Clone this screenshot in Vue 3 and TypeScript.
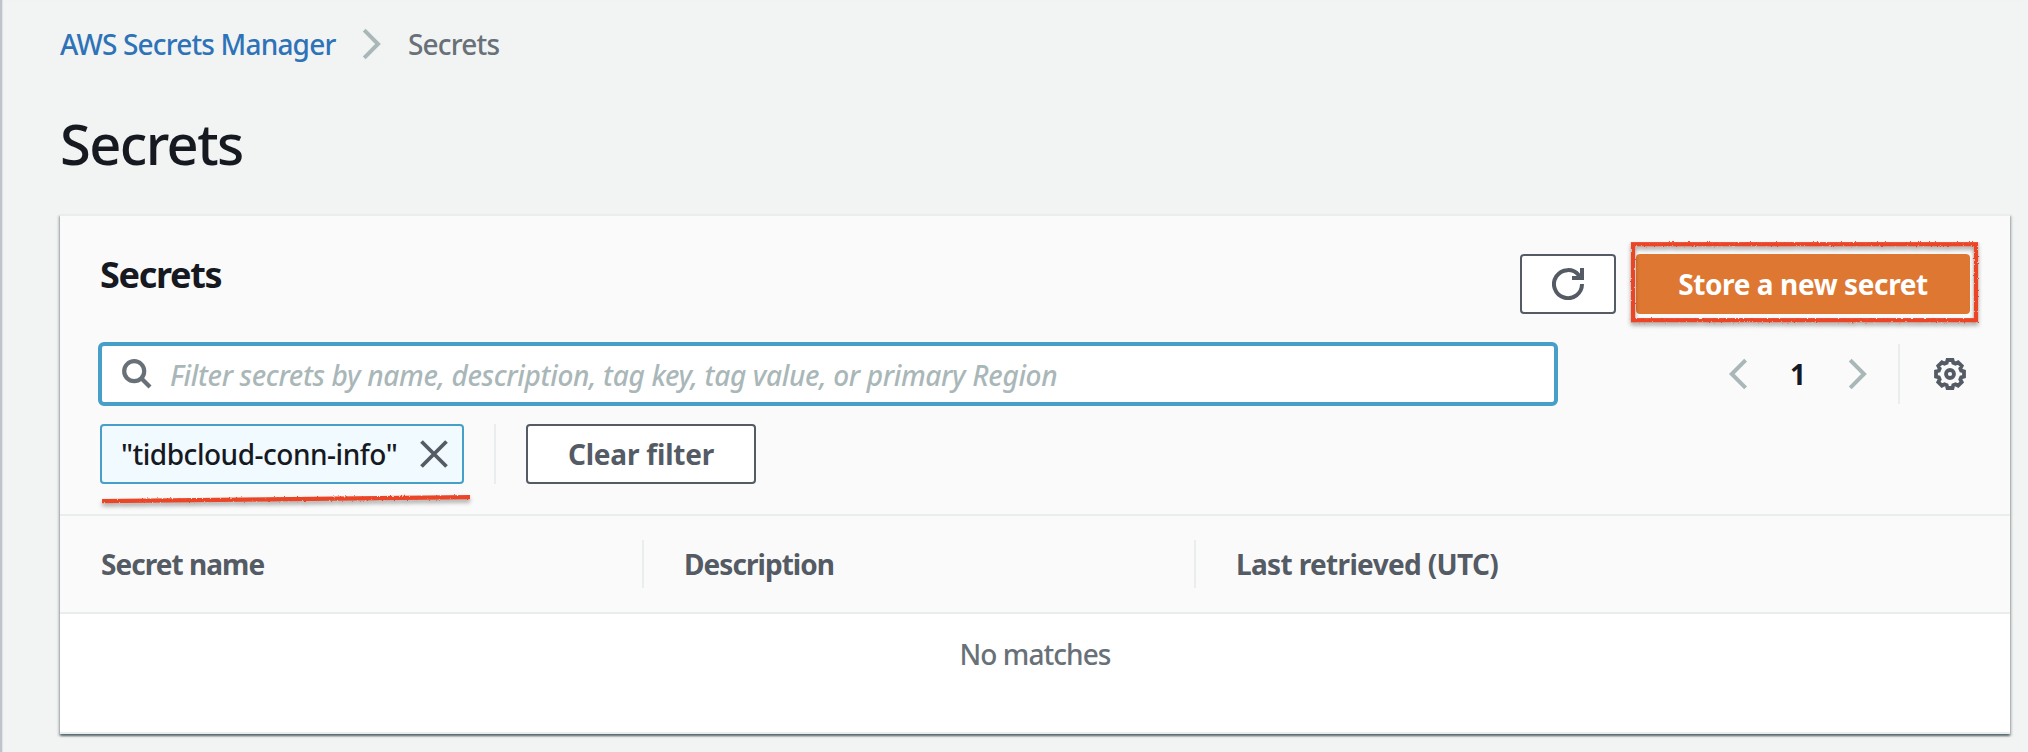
<script setup lang="ts">
import { ref } from 'vue'

const query = ref('')
const filters = ref<string[]>(['"tidbcloud-conn-info"'])
const columns = [
  { label: 'Secret name', key: 'name' },
  { label: 'Description', key: 'description' },
  { label: 'Last retrieved (UTC)', key: 'retrieved' },
]
const clearFilters = () => {
  filters.value = []
}
</script>

<template>
  <div class="page">
    <nav class="breadcrumb">
      <a class="crumb-link">AWS Secrets Manager</a>
      <svg class="crumb-sep" width="20" height="32" viewBox="0 0 20 32"><path d="M2.2 2.2 16 16 2.2 29.8" /></svg>
      <span class="crumb-current">Secrets</span>
    </nav>
    <h1 class="title"><span>Secrets</span></h1>

    <section class="panel">
      <div class="tools">
        <div class="top">
          <h2 class="heading">Secrets</h2>
          <div class="actions">
            <button class="btn refresh" aria-label="Refresh">
              <svg width="32" height="32" viewBox="0 0 32 32">
                <path class="ln" d="M30 16A14 14 0 1 1 26.8 7.2L29 10" />
                <path class="ln" d="M30 0V10H20" />
              </svg>
            </button>
            <div class="primary-wrap">
              <button class="btn primary"><span>Store a new secret</span></button>
              <svg class="marker box" width="360" height="94" viewBox="0 0 360 94">
                <defs>
                  <filter id="crayon" x="-5%" y="-20%" width="110%" height="150%">
                    <feTurbulence type="fractalNoise" baseFrequency="0.6" numOctaves="2" seed="4" result="n" />
                    <feDisplacementMap in="SourceGraphic" in2="n" scale="2.5" xChannelSelector="R" yChannelSelector="G" />
                  </filter>
                </defs>
                <rect x="7" y="6.2" width="343" height="76" filter="url(#crayon)" />
              </svg>
            </div>
          </div>
        </div>

        <div class="search-row">
          <label class="search">
            <svg width="30" height="30" viewBox="0 0 30 30">
              <circle cx="12.2" cy="12.2" r="10" />
              <path d="M19 19 28 28" />
            </svg>
            <input v-model="query" placeholder="Filter secrets by name, description, tag key, tag value, or primary Region" />
          </label>
          <div class="pager">
            <svg class="chev" width="20" height="32" viewBox="0 0 20 32"><path d="M17.6 2.2 3.8 16 17.6 29.8" /></svg>
            <b class="page-no">1</b>
            <svg class="chev" width="20" height="32" viewBox="0 0 20 32"><path d="M2.2 2.2 16 16 2.2 29.8" /></svg>
            <i class="rule"></i>
            <svg class="gear" width="32" height="32" viewBox="0 0 32 32">
              <path
                d="M13.5 2h5l.8 2.800 2.200.9 2.600-1.400 3.600 3.600-1.400 2.600.9 2.200 2.800.8v5l-2.800.8-.9 2.200 1.400 2.600-3.600 3.600-2.600-1.400-2.200.9-.8 2.800h-5l-.8-2.800-2.200-.9-2.600 1.400-3.600-3.600 1.400-2.600-.9-2.200L2 18.500v-5l2.800-.8.9-2.200-1.400-2.600 3.600-3.600 2.600 1.400 2.200-.9z"
              />
              <circle cx="16" cy="16" r="4" />
            </svg>
          </div>
        </div>

        <div class="chip-row">
          <div v-for="f in filters" :key="f" class="chip">
            <span>{{ f }}</span>
            <svg width="28" height="28" viewBox="0 0 28 28"><path d="M1.5 1.5 26.5 26.5M26.5 1.5 1.5 26.5" /></svg>
            <svg class="marker line" width="376" height="16" viewBox="0 0 376 16">
              <path d="M3 8.2 371 4.2" filter="url(#crayon-line)" />
              <defs>
                <filter id="crayon-line" filterUnits="userSpaceOnUse" x="0" y="-4" width="376" height="24">
                  <feTurbulence type="fractalNoise" baseFrequency="0.6" numOctaves="2" seed="7" result="n" />
                  <feDisplacementMap in="SourceGraphic" in2="n" scale="2.5" xChannelSelector="R" yChannelSelector="G" />
                </filter>
              </defs>
            </svg>
          </div>
          <i class="rule"></i>
          <button class="btn clear" @click="clearFilters"><span>Clear filter</span></button>
        </div>
      </div>

      <div class="columns">
        <div v-for="c in columns" :key="c.key" class="col" :class="c.key">
          <span>{{ c.label }}</span>
        </div>
      </div>
      <div class="empty"><span>No matches</span></div>
    </section>
  </div>
</template>

<style>
body {
  background: #f2f4f4;
  overflow: hidden;
}
</style>

<style scoped>
* {
  box-sizing: border-box;
}
.page {
  height: 752px;
  padding: 26px 18px 0 60px;
  background: #f2f4f3;
  box-shadow: inset 2px 0 0 #bec4c9, inset 3px 0 1px #dfe3e4;
  font-family: 'Noto Sans', 'Open Sans', sans-serif;
  font-size: 28px;
  line-height: 36px;
  color: #16191f;
}
svg {
  display: block;
  flex: none;
  fill: none;
}
.breadcrumb {
  display: flex;
  align-items: center;
  height: 36px;
  font-weight: 500;
  white-space: nowrap;
}
.crumb-link {
  width: 302px;
  color: #2e73b8;
  letter-spacing: -0.82px;
}
.crumb-current {
  margin-left: 26px;
  color: #687078;
  letter-spacing: -0.8px;
}
.crumb-sep,
.chev {
  stroke: #aab7b8;
  stroke-width: 4;
}
.title {
  margin: 47px 0 0;
  font-size: 56px;
  line-height: 68px;
  font-weight: 500;
  letter-spacing: -1.6px;
}
.panel {
  margin-top: 37px;
  width: 1950px;
  height: 520px;
  background: #fff;
  border-top: 2px solid #eaeded;
  border-bottom: 2px solid #eaeded;
  box-shadow: 0 2px 2px 0 rgba(0, 28, 36, 0.5), 2px 2px 2px 0 rgba(0, 28, 36, 0.15), -2px 2px 2px 0 rgba(0, 28, 36, 0.15);
}
.tools {
  height: 300px;
  padding: 38px 40px 0 38px;
  background: #fafafa;
  border-bottom: 2px solid #eaeded;
}
.top {
  display: flex;
  justify-content: space-between;
  height: 60px;
}
.heading {
  margin: 0 0 0 2px;
  font-size: 36px;
  line-height: 42px;
  font-weight: 700;
  letter-spacing: -1.3px;
}
.actions {
  display: flex;
  gap: 20px;
}
.btn {
  display: flex;
  align-items: center;
  justify-content: center;
  height: 60px;
  padding: 0 0 1px;
  background: #fff;
  border: 2px solid #545b64;
  border-radius: 4px;
  font: 700 28px/36px 'Noto Sans', sans-serif;
  color: #545b64;
  white-space: nowrap;
}
.refresh {
  width: 96px;
  padding: 0;
}
.ln {
  stroke: #545b64;
  stroke-width: 4;
}
.primary-wrap {
  position: relative;
}
.primary {
  width: 334px;
  background: #dd7732;
  border-color: #dd7732;
  color: #fff;
  letter-spacing: -0.4px;
}
.marker {
  position: absolute;
  stroke: #ec4427;
  stroke-width: 4.2;
  pointer-events: none;
  filter: drop-shadow(0 3px 2px rgba(0, 0, 0, 0.35));
}
.box {
  left: -10px;
  top: -16px;
}
.line {
  left: -3px;
  top: 67px;
}
.search-row {
  display: flex;
  align-items: center;
  justify-content: space-between;
  margin-top: 28px;
  height: 64px;
}
.search {
  display: flex;
  align-items: center;
  width: 1460px;
  height: 64px;
  padding-left: 20px;
  background: #fff;
  border: 4px solid #469fc8;
  border-radius: 6px;
}
.search svg {
  stroke: #687078;
  stroke-width: 4.2;
}
.search input {
  flex: 1;
  margin: 0 0 0 18px;
  padding: 2px 0 0;
  border: 0;
  outline: 0;
  background: none;
  font: italic 500 28px/36px 'Noto Sans', sans-serif;
  letter-spacing: -0.34px;
}
.search input::placeholder {
  color: #aab7b8;
  opacity: 1;
}
.pager {
  display: flex;
  align-items: center;
  padding-right: 4px;
}
.page-no {
  width: 100px;
  padding-bottom: 1px;
  text-align: center;
}
.rule {
  width: 2px;
  height: 60px;
  background: #eaeded;
}
.pager .rule {
  margin: 0 34px 0 30px;
}
.gear {
  stroke: #545b64;
  stroke-width: 3.8;
}
.chip-row {
  display: flex;
  align-items: center;
  margin: 18px 0 0 2px;
}
.chip {
  position: relative;
  display: flex;
  align-items: center;
  justify-content: space-between;
  width: 364px;
  height: 60px;
  padding: 0 14px 0 19px;
  background: #f1faff;
  border: 2px solid #469fc8;
  border-radius: 4px;
  font-weight: 500;
  letter-spacing: -0.48px;
  white-space: nowrap;
}
.chip span {
  padding-bottom: 0;
}
.chip > svg:not(.marker) {
  stroke: #545b64;
  stroke-width: 3.8;
}
.chip-row .rule {
  margin: 0 30px;
}
.clear {
  width: 230px;
  letter-spacing: -0.2px;
}
.columns {
  display: flex;
  align-items: center;
  height: 98px;
  background: #fafafa;
  border-bottom: 2px solid #eaeded;
  font-weight: 700;
  color: #545b64;
}
.col {
  height: 48px;
  padding: 6px 0 0 40px;
  white-space: nowrap;
  letter-spacing: -0.65px;
}
.col.name {
  width: 584px;
  padding-left: 41px;
  border-right: 2px solid #eaeded;
  letter-spacing: -0.95px;
}
.col.description {
  width: 552px;
  border-right: 2px solid #eaeded;
  letter-spacing: -0.95px;
}
.empty {
  padding-top: 22px;
  text-align: center;
  color: #687078;
  font-weight: 500;
  letter-spacing: -0.95px;
}
</style>
